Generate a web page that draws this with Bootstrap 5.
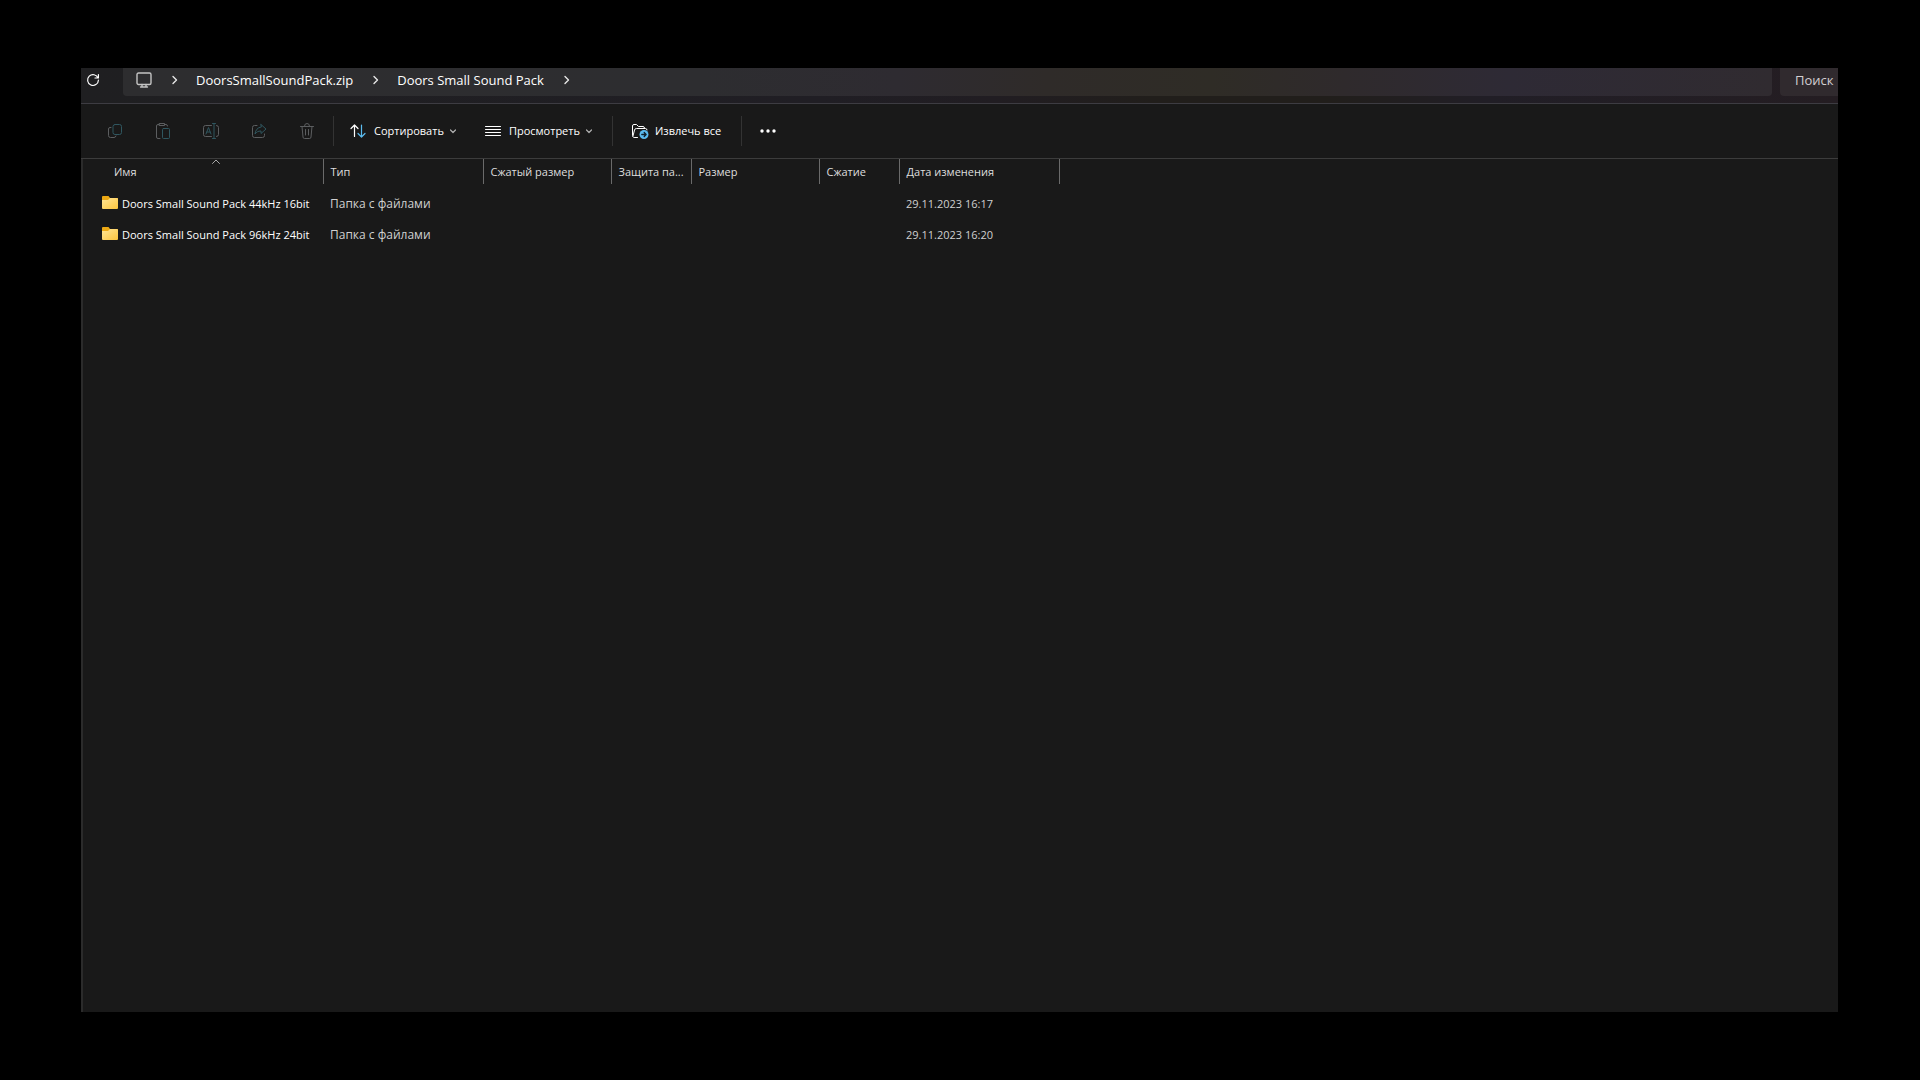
<!DOCTYPE html>
<html lang="ru" data-bs-theme="dark">
<head>
<meta charset="utf-8">
<meta name="viewport" content="width=device-width, initial-scale=1">
<title>Doors Small Sound Pack</title>
<link href="https://cdn.jsdelivr.net/npm/bootstrap@5.3.0/dist/css/bootstrap.min.css" rel="stylesheet">
<style>
  body { background: #000; color: #fff; font-family: "Open Sans", "Noto Sans", sans-serif; font-size: 11px; line-height: 16px; padding: 68px 82px 68px 81px; }
  svg { display: block; flex: none; fill: none; stroke: currentColor; stroke-linecap: round; stroke-linejoin: round; }
  .explorer { background: #191919; }
  .topbar { height: 36px; border-bottom: 1px solid #3d3c42; background: linear-gradient(90deg, #1f1f21 0%, #201e24 42%, #211d22 52%, #211e1b 61%, #211e1b 71%, #211e26 80%, #241d22 100%); }
  .refresh { --bs-btn-color: #fff; --bs-btn-padding-x: 5px; --bs-btn-padding-y: 5px; width: 42px; }
  .address { height: 28px; padding: 0 13px 4px; border-radius: 0 0 4px 4px; background: linear-gradient(90deg, #2d2d2f 0%, #2d2d30 35%, #2e2b31 47%, #2f2b29 56%, #2f2c26 66%, #2f2a2c 74%, #2e2a35 84%, #302b30 100%); }
  .device { color: #c4c4c4; }
  .crumb, .search { font-size: 13px; line-height: 20px; }
  .crumb { color: #fff; text-decoration: none; }
  .crumb-sep { margin: 0 18px 0 20px; color: #e6e6e6; }
  .search { width: 58px; height: 28px; margin-left: 8px; padding: 0 0 4px 15px; border: 0; border-radius: 0 0 0 4px; background: #302a2e; color: #d3cfd2; }
  .search::placeholder { color: #d3cfd2; opacity: 1; }
  .commands { height: 55px; padding-left: 10px; border-bottom: 1px solid #3c3c3c; }
  .commands .btn { --bs-btn-font-size: 11px; --bs-btn-line-height: 16px; --bs-btn-color: #fff; --bs-btn-border-width: 0; --bs-btn-padding-x: 0; --bs-btn-padding-y: 8px; gap: 6px; }
  .commands .tool { width: 48px; --bs-btn-disabled-color: #5c5e60; --bs-btn-disabled-opacity: 1; }
  .tool .tint { stroke: #2f565f; }
  .divider { width: 1px; height: 30px; margin: 0 18px 0 20px; background: #333; }
  .tool + .divider { margin: 0 16px 0 2px; }
  .commands .view { margin-left: 29px; }
  .sky { stroke: #5bbcf0; }
  .chev { color: #b0b0b0; }
  .listing { border-left: 2px solid #2b2b2b; }
  .files { width: 976px; table-layout: fixed; }
  .files th { height: 25px; padding: 0 0 0 7px; border-right: 1px solid #6a6a6a; font-weight: 400; color: #dedede; vertical-align: middle; white-space: nowrap; position: relative; }
  .files th:first-child { padding-left: 31px; }
  .files tbody::before { content: ""; display: block; height: 4px; }
  .files td { height: 31px; padding: 0 0 0 7px; color: #d0d0d0; vertical-align: middle; white-space: nowrap; }
  .files td:first-child { padding-left: 19px; }
  .files .kind { font-size: 12px; }
  .files a { color: #fff; text-decoration: none; gap: 4px; }
  .sorted { position: absolute; top: 0; left: 128px; color: #a8a8a8; }
  .w-name { width: 240px; } .w-l { width: 160px; } .w-m { width: 128px; } .w-s { width: 80px; }
</style>
<script src="https://cdn.jsdelivr.net/npm/bootstrap@5.3.0/dist/js/bootstrap.bundle.min.js"></script>
</head>
<body class="min-vh-100 d-flex flex-column">
<svg width="0" height="0" class="position-absolute" aria-hidden="true">
  <defs>
    <linearGradient id="gold" x1="0" y1="0" x2="1" y2="1"><stop offset="0" stop-color="#ffe596"/><stop offset="1" stop-color="#fcc53d"/></linearGradient>
    <symbol id="folder" viewBox="0 0 16 16"><path fill="#eda914" stroke="none" d="M0 1Q0 0 1 0H6.500L8 2H15Q16 2 16 3V10H0z"/><path fill="url(#gold)" stroke="none" d="M0 4H6L8 2H15Q16 2 16 3V12Q16 13 15 13H1Q0 13 0 12z"/></symbol>
    <symbol id="next" viewBox="0 0 6 10"><path stroke-width="1.400" d="M1 1.500 4.500 5 1 8.500"/></symbol>
    <symbol id="down" viewBox="0 0 6 5"><path stroke-width="1.200" d="M.5 1 3 3.500 5.500 1"/></symbol>
  </defs>
</svg>
<main class="explorer flex-grow-1 d-flex flex-column overflow-hidden">
  <header class="topbar d-flex align-items-start">
    <button class="refresh btn border-0 flex-shrink-0" type="button" aria-label="Обновить">
      <svg width="14" height="14" viewBox="0 0 14 14" stroke-width="1.200"><path d="M12 5A5.400 5.400 0 1 0 12.400 7.200M12.400 1.500V5H9"/></svg>
    </button>
    <nav class="address flex-grow-1 d-flex align-items-center" aria-label="Адрес">
      <svg class="device" width="16" height="16" viewBox="0 0 16 16" stroke-width="1.400"><rect x="1" y="1" width="14" height="11.500" rx="1.500"/><path d="M6 12.500v2M10 12.500v2M4.500 15H11.500"/></svg>
      <svg class="crumb-sep" width="6" height="10"><use href="#next"/></svg>
      <a class="crumb" href="#">DoorsSmallSoundPack.zip</a>
      <svg class="crumb-sep" width="6" height="10"><use href="#next"/></svg>
      <a class="crumb" href="#">Doors Small Sound Pack</a>
      <svg class="crumb-sep" width="6" height="10"><use href="#next"/></svg>
    </nav>
    <input class="search" type="text" placeholder="Поиск" aria-label="Поиск">
  </header>
  <div class="commands d-flex align-items-center" role="toolbar" aria-label="Команды">
    <button class="btn tool d-flex justify-content-center" type="button" disabled aria-label="Копировать"><svg width="16" height="16" viewBox="0 0 16 16"><path d="M4 4.500H3A1.500 1.500 0 0 0 1.500 6v6.500A2 2 0 0 0 3.500 14.500H7a2 2 0 0 0 2-1.500"/><rect class="tint" x="6" y="1.500" width="8.500" height="10" rx="2"/></svg></button>
    <button class="btn tool d-flex justify-content-center" type="button" disabled aria-label="Вставить"><svg width="16" height="16" viewBox="0 0 16 16"><path d="M5 15.500H3A1.500 1.500 0 0 1 1.500 14V3A1.500 1.500 0 0 1 3 1.500H4M10 1.500H11A1.500 1.500 0 0 1 12.500 3M4.500.5h5v2h-5z"/><rect class="tint" x="7.500" y="5.500" width="7" height="10" rx="1"/></svg></button>
    <button class="btn tool d-flex justify-content-center" type="button" disabled aria-label="Переименовать"><svg width="16" height="16" viewBox="0 0 16 16"><path d="M8.500 2.500h-6A2 2 0 0 0 .5 4.500v7a2 2 0 0 0 2 2h6M13.500 2.500A2 2 0 0 1 15.500 4.500v7a2 2 0 0 1-2 2"/><path class="tint" d="M9.500.5h3M9.500 15.500h3M11 .5v15M3 11 5.500 4.500 8 11M4 9h3"/></svg></button>
    <button class="btn tool d-flex justify-content-center" type="button" disabled aria-label="Поделиться"><svg width="16" height="16" viewBox="0 0 16 16"><path d="M6 2.500H3.500a2 2 0 0 0-2 2v8a2 2 0 0 0 2 2h8a2 2 0 0 0 2-2V11"/><path class="tint" d="M10 1.500 15 6 10 10.500V8C7 8 5.500 9 4 11 4.500 7 6.500 4.500 10 4z"/></svg></button>
    <button class="btn tool d-flex justify-content-center" type="button" disabled aria-label="Удалить"><svg width="16" height="16" viewBox="0 0 16 16"><path d="M1.500 3.500h13M5.500 3A2.500 2.500 0 0 1 10.500 3M3 3.500 4 14A1.500 1.500 0 0 0 5.500 15.500h5A1.500 1.500 0 0 0 12 14L13 3.500M6.500 6.500v5.500M9.500 6.500v5.500"/></svg></button>
    <span class="divider"></span>
    <button class="btn d-flex align-items-center" type="button">
      <svg width="18" height="16" viewBox="0 0 18 16" stroke-width="1.200"><path d="M4.500 13.500V2M1 5.500 4.500 2 8 5.500"/><path class="sky" d="M11.500 2v12M8 10.500 11.500 14 15 10.500"/></svg>Сортировать
      <svg class="chev" width="6" height="5"><use href="#down"/></svg></button>
    <button class="btn view d-flex align-items-center" type="button">
      <svg width="18" height="16" viewBox="0 0 18 16"><path d="M.5 3.500H15.500M.5 6.500H15.500M.5 9.500H15.500M.5 12.500H15.500"/></svg>Просмотреть
      <svg class="chev" width="6" height="5"><use href="#down"/></svg></button>
    <span class="divider"></span>
    <button class="btn d-flex align-items-center" type="button">
      <svg width="18" height="16" viewBox="0 0 18 16"><path d="M6.500 14.500H4A2 2 0 0 1 1.500 12.500V3A1.500 1.500 0 0 1 3 1.500H5.500L7.500 3.500H12A1.500 1.500 0 0 1 13.500 5M2 13 3.500 7A2 2 0 0 1 5.500 5.500H14.500Q16 5.500 16 7"/><circle cx="13" cy="11.500" r="4.500" fill="#5bbcf0" stroke="none"/><path stroke="#10202c" stroke-width="1.300" d="M10.800 11.500h4M13.200 9.500 15.100 11.500 13.200 13.500"/></svg>Извлечь все</button>
    <span class="divider"></span>
    <button class="btn d-flex" type="button" aria-label="Дополнительно"><svg width="16" height="16" viewBox="0 0 16 16"><g fill="#fff" stroke="none"><circle cx="2" cy="8" r="1.700"/><circle cx="8" cy="8" r="1.700"/><circle cx="14" cy="8" r="1.700"/></g></svg></button>
  </div>
  <div class="listing flex-grow-1">
    <table class="files">
      <colgroup><col class="w-name"><col class="w-l"><col class="w-m"><col class="w-s"><col class="w-m"><col class="w-s"><col class="w-l"></colgroup>
      <thead><tr>
        <th scope="col" aria-sort="ascending">Имя<svg class="sorted" width="10" height="6" viewBox="0 0 10 6"><path d="M1.500 4.500 5 1 8.500 4.500"/></svg></th>
        <th scope="col">Тип</th><th scope="col">Сжатый размер</th><th scope="col">Защита па...</th><th scope="col">Размер</th><th scope="col">Сжатие</th><th scope="col">Дата изменения</th>
      </tr></thead>
      <tbody>
        <tr><td><a class="d-flex align-items-center" href="#"><svg width="16" height="16"><use href="#folder"/></svg>Doors Small Sound Pack 44kHz 16bit</a></td><td class="kind">Папка с файлами</td><td></td><td></td><td></td><td></td><td>29.11.2023 16:17</td></tr>
        <tr><td><a class="d-flex align-items-center" href="#"><svg width="16" height="16"><use href="#folder"/></svg>Doors Small Sound Pack 96kHz 24bit</a></td><td class="kind">Папка с файлами</td><td></td><td></td><td></td><td></td><td>29.11.2023 16:20</td></tr>
      </tbody>
    </table>
  </div>
</main>
</body>
</html>
